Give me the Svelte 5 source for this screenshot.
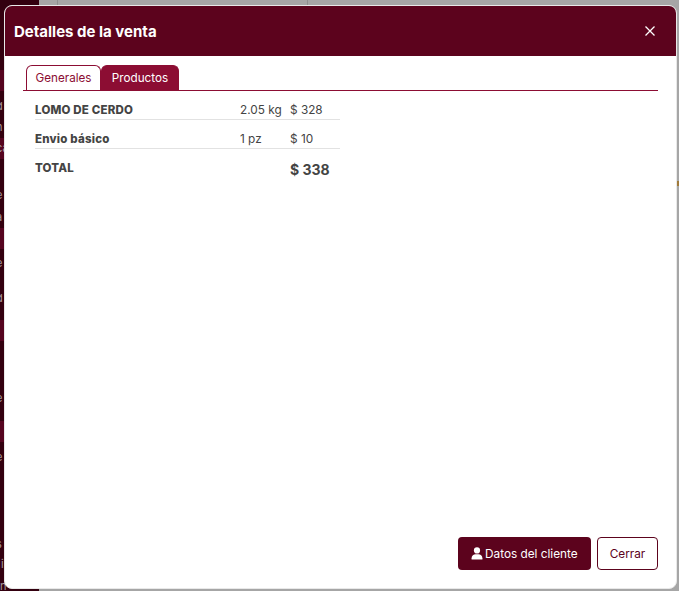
<script>
  const items = [
    { name: 'LOMO DE CERDO', qty: '2.05 kg', price: '$ 328' },
    { name: 'Envio básico', qty: '1 pz', price: '$ 10' },
  ]

  // what is left visible of the page behind the modal
  const bands = [70, 138, 228, 320, 421]
  const crumbs = [
    ['d', 99, -4], ['n', 120, -4], ['ca', 141, -4], ['e', 188, -4], ['a', 210, -4], ['e', 256, -4],
    ['d', 291, -4], ['e', 391, -4], ['e', 450, -4], ['s', 537, -4], ['i', 557, 1], ['n', 579, 0],
  ]
</script>

<div class="page">
  <div class="topbar">
    <span class="cell first"></span>
    <span class="cell wide"></span>
  </div>
  <aside class="sidebar">
    {#each bands as top}
      <span class="band" style:top="{top}px"></span>
    {/each}
    {#each crumbs as [text, top, left]}
      <span class="crumb" style:top="{top}px" style:left="{left}px">{text}</span>
    {/each}
  </aside>
  <span class="edge-mark"></span>

  <div class="modal">
    <header class="modal-header">
      <h1>Detalles de la venta</h1>
      <svg class="close" width="12" height="12" viewBox="0 0 12 12" aria-label="Cerrar">
        <path d="M1.5 1.5l9 9M10.5 1.5l-9 9" stroke="#fff" stroke-width="1.3" fill="none" />
      </svg>
    </header>

    <div class="modal-body">
      <nav class="tabs">
        <button class="tab">Generales</button>
        <button class="tab active">Productos</button>
      </nav>

      <div class="products">
        {#each items as item}
          <div class="row">
            <span class="name">{item.name}</span>
            <span class="qty">{item.qty}</span>
            <span class="price">{item.price}</span>
          </div>
        {/each}
        <div class="row total">
          <span class="name">TOTAL</span>
          <span class="qty"></span>
          <span class="price">$ 338</span>
        </div>
      </div>
    </div>

    <footer class="modal-footer">
      <button class="btn primary">
        <svg width="12" height="13" viewBox="0 0 12 13">
          <circle cx="6" cy="3.4" r="3.1" fill="#fff" />
          <path d="M0.6 12.6v-1.4c0-2.5 2-4 4-4h2.8c2 0 4 1.5 4 4v1.4z" fill="#fff" />
        </svg>
        Datos del cliente
      </button>
      <button class="btn outline">Cerrar</button>
    </footer>
  </div>
</div>

<style>
  :global(body) {
    margin: 0;
    background: #a6a6a6;
  }

  .page {
    position: relative;
    width: 679px;
    height: 591px;
    overflow: hidden;
    font-family: Inter, "Noto Sans", sans-serif;
    background: #a6a6a6;
  }

  .topbar {
    display: flex;
    height: 5px;
    padding-left: 39px;
  }

  .cell {
    border-right: 1px solid #8f8f8f;
  }

  .first {
    width: 18px;
  }

  .wide {
    width: 249px;
  }

  .sidebar {
    position: absolute;
    left: 0;
    top: 0;
    bottom: 0;
    width: 39px;
    background: #33000f;
  }

  .band {
    position: absolute;
    left: 0;
    right: 0;
    height: 21px;
    background: #55041f;
  }

  .crumb {
    position: absolute;
    font-size: 11px;
    color: #a89a9e;
  }

  .edge-mark {
    position: absolute;
    left: 677px;
    top: 181px;
    width: 2px;
    height: 5px;
    background: #a07a3a;
  }

  .modal {
    position: absolute;
    left: 4px;
    top: 5px;
    width: 673px;
    height: 584px;
    display: flex;
    flex-direction: column;
    box-sizing: border-box;
    background: #fff;
    border: 1px solid #e8e8e8;
    border-radius: 8px;
    overflow: hidden;
  }

  .modal-header {
    display: flex;
    align-items: center;
    justify-content: space-between;
    height: 50px;
    flex-shrink: 0;
    padding: 0 20px 0 9px;
    background: #5c031d;
  }

  h1 {
    margin: 0;
    font-size: 15px;
    font-weight: 700;
    color: #fff;
  }

  .close {
    display: block;
  }

  .modal-body {
    flex: 1;
    padding: 9px 18px 0 18px;
  }

  .tabs {
    display: flex;
    padding-left: 3px;
    border-bottom: 1px solid #8c0d33;
  }

  .tab {
    height: 25px;
    padding: 0;
    font: inherit;
    font-size: 11.7px;
    color: #8c0d33;
    background: #fff;
    border: 1px solid #8c0d33;
    border-bottom: 0;
    border-radius: 6px 6px 0 0;
  }

  .tab:first-child {
    width: 75px;
  }

  .tab.active {
    width: 78px;
    color: #fff;
    background: #8c0d33;
  }

  .products {
    width: 305px;
    margin-left: 12px;
  }

  .row {
    display: grid;
    grid-template-columns: 205px 50px 1fr;
    align-items: start;
    height: 29px;
    padding-top: 12px;
    box-sizing: border-box;
    font-size: 11.8px;
    color: #444;
    border-bottom: 1px solid #e2e2e2;
  }

  .name {
    font-weight: 800;
    font-size: 11.5px;
    letter-spacing: 0.2px;
  }

  .total {
    border-bottom: 0;
  }

  .total .price {
    font-size: 14px;
    font-weight: 700;
  }

  .modal-footer {
    display: flex;
    justify-content: flex-end;
    gap: 6px;
    padding: 0 18px 18px 0;
  }

  .btn {
    height: 33px;
    box-sizing: border-box;
    font: inherit;
    font-size: 11.8px;
    border-radius: 4px;
  }

  .primary {
    display: flex;
    align-items: center;
    gap: 2px;
    width: 133px;
    padding: 0 0 0 13px;
    color: #fff;
    background: #5c031d;
    border: 0;
  }

  .outline {
    width: 61px;
    padding: 0;
    color: #5c031d;
    background: #fff;
    border: 1px solid #5c031d;
  }
</style>
